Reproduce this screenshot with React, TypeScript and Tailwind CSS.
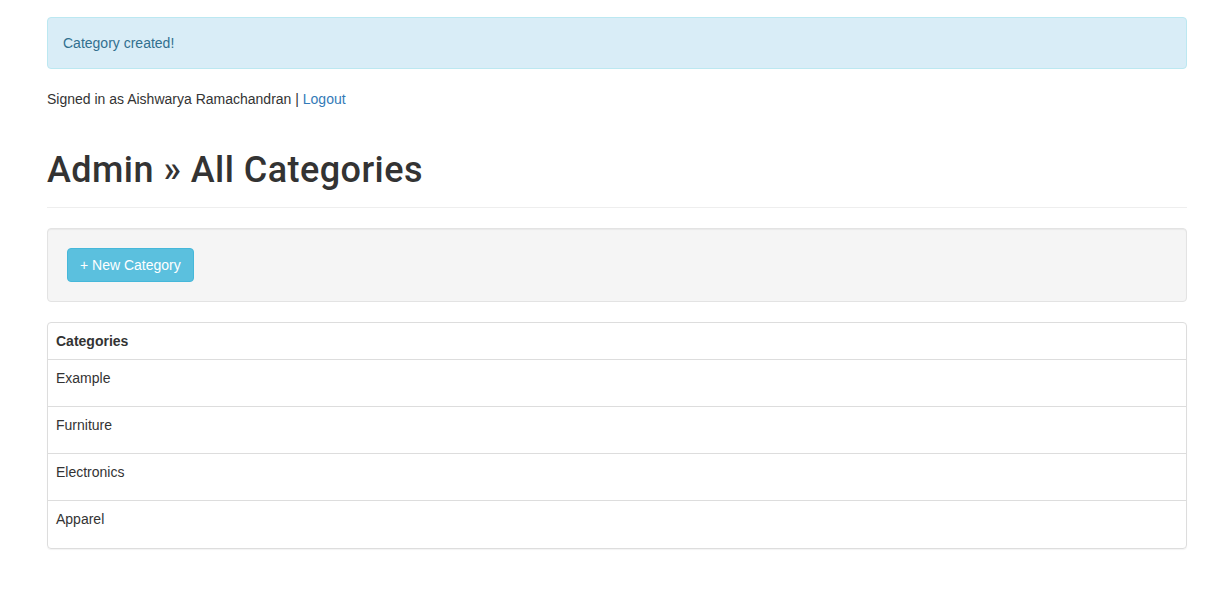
import React from 'react'

const categories = ['Example', 'Furniture', 'Electronics', 'Apparel']

export default function App() {
  return (
    <div className="min-h-screen bg-white font-['Liberation_Sans',Arial,sans-serif] text-[14px] leading-[20px] text-[#333]">
      <div className="ml-[47px] w-[1140px] pt-[17px]">
        {/* Flash */}
        <div className="mb-[20px] h-[52px] rounded-[4px] border border-[#bce8f1] bg-[#d9edf7] px-[15px] py-[15px] text-[#31708f]">
          Category created!
        </div>

        <p className="mb-[10px]">
          Signed in as Aishwarya Ramachandran |{' '}
          <a href="#" className="text-[#337ab7]">
            Logout
          </a>
        </p>

        {/* Page header */}
        <div className="mt-[40px] border-b border-[#eee] pb-[9px]">
          <h1 className="mb-[10px] h-[39px] font-['Roboto',Arial,sans-serif] text-[36px] leading-[43px] font-medium tracking-[0.45px] text-[#333]">
            Admin » All Categories
          </h1>
        </div>

        {/* Well */}
        <div className="mt-[20px] rounded-[4px] border border-[#e3e3e3] bg-[#f5f5f5] p-[19px] shadow-[inset_0_1px_1px_rgba(0,0,0,0.05)]">
          <button className="h-[34px] rounded-[4px] border border-[#46b8da] bg-[#5bc0de] px-[12px] text-[14px] text-white">
            + New Category
          </button>
        </div>

        {/* Panel */}
        <div className="mt-[20px] rounded-[4px] border border-[#ddd] shadow-[0_1px_1px_rgba(0,0,0,0.05)]">
          <div className="h-[37px] border-b border-[#ddd] px-[8px] pt-[8px] font-bold">Categories</div>
          {categories.map((c, i) => (
            <div
              key={c}
              className={`h-[47px] px-[8px] pt-[8px] ${i < categories.length - 1 ? 'border-b border-[#ddd]' : ''}`}
            >
              {c}
            </div>
          ))}
        </div>
      </div>
    </div>
  )
}
